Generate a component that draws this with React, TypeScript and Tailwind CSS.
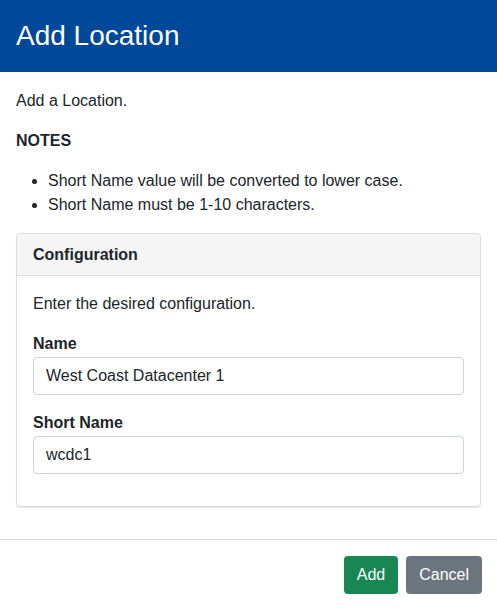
export default function App() {
    return (
        <div className="w-[497px] h-[608px] bg-white font-['Liberation_Sans',Arial,sans-serif] text-[16px] leading-6 text-[#212529] overflow-hidden">
            <div className="h-[72px] bg-[#00489a] px-4 flex items-center">
                <h4 className="text-[28px] leading-[42px] text-white">Add Location</h4>
            </div>

            <div className="px-4 pt-[17px] pb-4">
                <p className="mb-4">Add a Location.</p>
                <p className="mb-4 font-bold">NOTES</p>
                <ul className="list-disc pl-8 mb-4">
                    <li>Short Name value will be converted to lower case.</li>
                    <li>Short Name must be 1-10 characters.</li>
                </ul>

                <div className="mb-4 border border-[#dcdcdc] rounded-[4px] shadow-[0_1px_1px_rgba(0,0,0,0.1)]">
                    <div className="bg-[#f5f5f5] border-b border-[#dcdcdc] px-4 pt-[9px] pb-2 font-bold rounded-t-[4px]">
                        Configuration
                    </div>
                    <div className="p-4">
                        <p className="mb-4">Enter the desired configuration.</p>
                        <div className="mb-4">
                            <label className="block font-bold mb-px">Name</label>
                            <input
                                readOnly
                                value="West Coast Datacenter 1"
                                className="block w-full h-[38px] border border-[#ced4da] rounded-[4px] px-3 text-[#212529] outline-none"
                            />
                        </div>
                        <div className="mb-4">
                            <label className="block font-bold mb-px">Short Name</label>
                            <input
                                readOnly
                                value="wcdc1"
                                className="block w-full h-[38px] border border-[#ced4da] rounded-[4px] px-3 text-[#212529] outline-none"
                            />
                        </div>
                    </div>
                </div>
            </div>

            <div className="border-t border-[#dee2e6] px-[15px] pt-4 flex justify-end gap-2">
                <button className="h-[38px] px-[13px] rounded-[4px] bg-[#198754] text-white">Add</button>
                <button className="h-[38px] px-[13px] rounded-[4px] bg-[#6c757d] text-white">Cancel</button>
            </div>
        </div>
    );
}
